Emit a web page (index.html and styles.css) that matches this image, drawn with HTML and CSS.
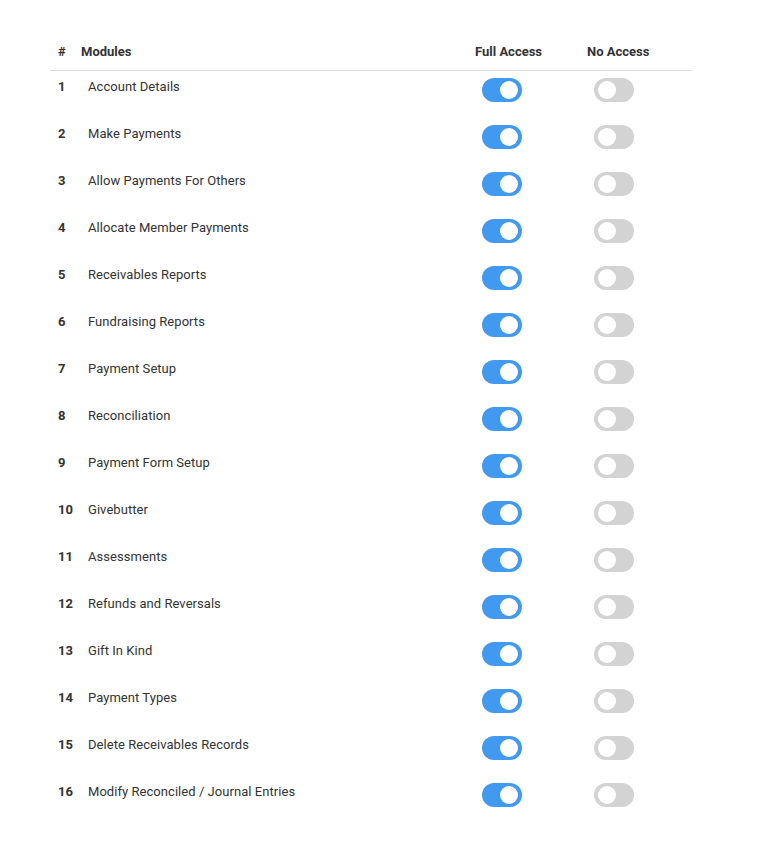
FILE: index.html
```html
<!DOCTYPE html>
<html lang="en">
<head>
<meta charset="utf-8">
<title>Module Access</title>
<link rel="stylesheet" href="styles.css">
</head>
<body>
<div class="access-table">
  <div class="row head">
    <div class="c-num">#</div>
    <div class="c-mod">Modules</div>
    <div class="c-full">Full Access</div>
    <div class="c-none">No Access</div>
  </div>
  <div class="row"><div class="c-num">1</div><div class="c-mod">Account Details</div><div class="c-full"><span class="toggle on"></span></div><div class="c-none"><span class="toggle"></span></div></div>
  <div class="row"><div class="c-num">2</div><div class="c-mod">Make Payments</div><div class="c-full"><span class="toggle on"></span></div><div class="c-none"><span class="toggle"></span></div></div>
  <div class="row"><div class="c-num">3</div><div class="c-mod">Allow Payments For Others</div><div class="c-full"><span class="toggle on"></span></div><div class="c-none"><span class="toggle"></span></div></div>
  <div class="row"><div class="c-num">4</div><div class="c-mod">Allocate Member Payments</div><div class="c-full"><span class="toggle on"></span></div><div class="c-none"><span class="toggle"></span></div></div>
  <div class="row"><div class="c-num">5</div><div class="c-mod">Receivables Reports</div><div class="c-full"><span class="toggle on"></span></div><div class="c-none"><span class="toggle"></span></div></div>
  <div class="row"><div class="c-num">6</div><div class="c-mod">Fundraising Reports</div><div class="c-full"><span class="toggle on"></span></div><div class="c-none"><span class="toggle"></span></div></div>
  <div class="row"><div class="c-num">7</div><div class="c-mod">Payment Setup</div><div class="c-full"><span class="toggle on"></span></div><div class="c-none"><span class="toggle"></span></div></div>
  <div class="row"><div class="c-num">8</div><div class="c-mod">Reconciliation</div><div class="c-full"><span class="toggle on"></span></div><div class="c-none"><span class="toggle"></span></div></div>
  <div class="row"><div class="c-num">9</div><div class="c-mod">Payment Form Setup</div><div class="c-full"><span class="toggle on"></span></div><div class="c-none"><span class="toggle"></span></div></div>
  <div class="row"><div class="c-num">10</div><div class="c-mod">Givebutter</div><div class="c-full"><span class="toggle on"></span></div><div class="c-none"><span class="toggle"></span></div></div>
  <div class="row"><div class="c-num">11</div><div class="c-mod">Assessments</div><div class="c-full"><span class="toggle on"></span></div><div class="c-none"><span class="toggle"></span></div></div>
  <div class="row"><div class="c-num">12</div><div class="c-mod">Refunds and Reversals</div><div class="c-full"><span class="toggle on"></span></div><div class="c-none"><span class="toggle"></span></div></div>
  <div class="row"><div class="c-num">13</div><div class="c-mod">Gift In Kind</div><div class="c-full"><span class="toggle on"></span></div><div class="c-none"><span class="toggle"></span></div></div>
  <div class="row"><div class="c-num">14</div><div class="c-mod">Payment Types</div><div class="c-full"><span class="toggle on"></span></div><div class="c-none"><span class="toggle"></span></div></div>
  <div class="row"><div class="c-num">15</div><div class="c-mod">Delete Receivables Records</div><div class="c-full"><span class="toggle on"></span></div><div class="c-none"><span class="toggle"></span></div></div>
  <div class="row"><div class="c-num">16</div><div class="c-mod">Modify Reconciled / Journal Entries</div><div class="c-full"><span class="toggle on"></span></div><div class="c-none"><span class="toggle"></span></div></div>
</div>
</body>
</html>
```
FILE: styles.css
```css
html, body {
  margin: 0;
  padding: 0;
  background: #ffffff;
}
body {
  font-family: Roboto, "Liberation Sans", Arial, sans-serif;
  font-size: 13px;
  line-height: 16px;
  color: #333333;
}
.access-table {
  width: 642px;
  margin: 44px 0 0 50px;
}
.row {
  display: grid;
  grid-template-columns: 23px 394px 112px 113px;
  height: 47px;
}
.row > div {
  padding-top: 8px;
}
.row .c-full, .row .c-none {
  padding-top: 7px;
  padding-left: 15px;
}
.c-num {
  padding-left: 8px;
  font-weight: 700;
  color: #333333;
}
.c-mod {
  padding-left: 15px;
  letter-spacing: 0.05px;
}
.head {
  height: auto;
  border-bottom: 1px solid #dedede;
  font-weight: 700;
  color: #333333;
}
.head > div {
  padding-top: 0;
  padding-bottom: 10px;
}
.head .c-mod, .head .c-full, .head .c-none {
  padding-left: 8px;
  padding-top: 0;
  letter-spacing: 0;
}
.toggle {
  position: relative;
  display: block;
  width: 40px;
  height: 24px;
  border-radius: 12px;
  background: #d3d3d3;
}
.toggle::after {
  content: "";
  position: absolute;
  top: 3px;
  left: 4px;
  width: 18px;
  height: 18px;
  border-radius: 50%;
  background: #ffffff;
}
.toggle.on {
  background: #4299f0;
}
.toggle.on::after {
  left: 18px;
}
```
